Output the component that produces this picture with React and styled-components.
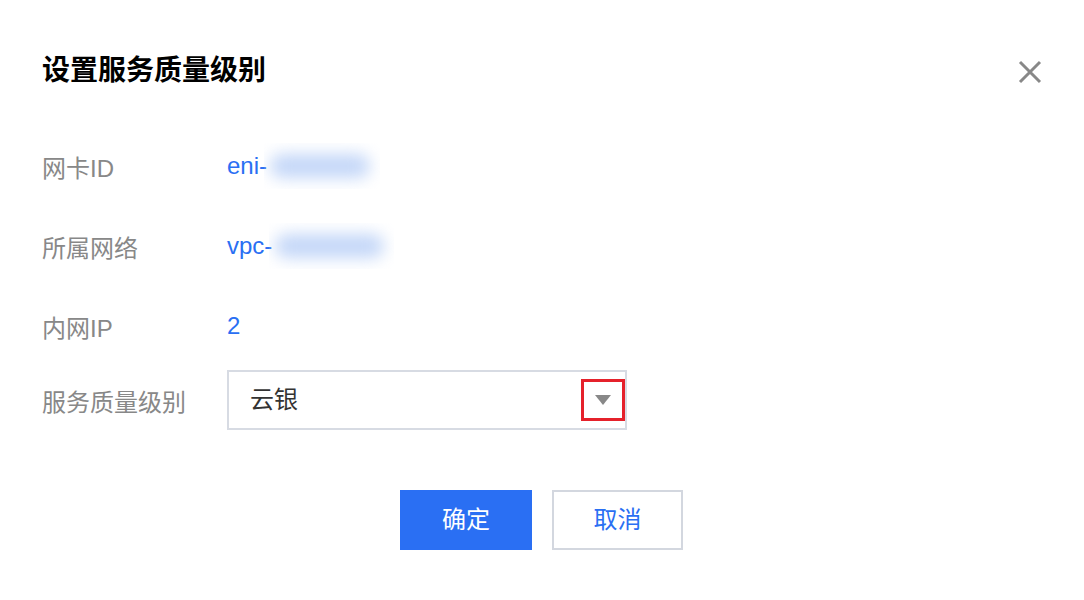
import React from "react";
import styled, { createGlobalStyle } from "styled-components";

const GlobalStyle = createGlobalStyle`
  html, body {
    margin: 0;
    padding: 0;
    background: #fff;
  }
  body {
    font-family: "Liberation Sans", "Noto Sans CJK SC", sans-serif;
  }
  * {
    box-sizing: border-box;
  }
`;

const BLUE = "#2a6ff3";

const Dialog = styled.div`
  width: 1084px;
  height: 600px;
  background: #fff;
  padding: 50px 42px 0 42px;
`;

const Header = styled.div`
  display: flex;
  justify-content: space-between;
  align-items: flex-start;
  height: 36px;
`;

const Title = styled.h1`
  margin: 0;
  font-size: 28px;
  line-height: 36px;
  font-weight: 700;
  color: #000;
  font-family: "Noto Sans CJK SC", sans-serif;
`;

const CloseButton = styled.button`
  border: 0;
  background: none;
  padding: 0;
  margin-top: 10px;
  width: 24px;
  height: 24px;
  cursor: pointer;
  display: flex;
`;

const Form = styled.div`
  margin-top: 40px;
  display: flex;
  flex-direction: column;
`;

const Row = styled.div`
  display: flex;
  align-items: center;
  height: ${(p) => p.$height || 80}px;
  margin-top: ${(p) => p.$offset || 0}px;
`;

const Label = styled.div`
  width: 185px;
  flex-shrink: 0;
  font-size: 24px;
  color: #888;
  font-family: "Liberation Sans", "Noto Sans CJK SC", sans-serif;
`;

const Value = styled.div`
  display: flex;
  align-items: center;
  font-size: 24px;
  color: ${BLUE};
`;

/* blurred-out identifier, drawn as a soft blue band */
const Masked = styled.span`
  display: inline-block;
  position: relative;
  width: ${(p) => p.$width}px;
  height: 46px;
  overflow: hidden;
  margin-left: -3px;

  &::after {
    content: "";
    position: absolute;
    left: 6px;
    right: 10px;
    top: 11px;
    bottom: 11px;
    border-radius: 12px;
    background: #c4d7f8;
    filter: blur(8px);
  }
`;

const Select = styled.div`
  width: 400px;
  height: 60px;
  border: 2px solid #d7dbe3;
  display: flex;
  align-items: center;
  justify-content: space-between;
  padding-left: 21px;
  font-size: 24px;
  color: #333;
  font-family: "Noto Sans CJK SC", sans-serif;
`;

const SelectText = styled.span`
  margin-bottom: 6px;
`;

const Marker = styled.span`
  width: 44px;
  height: 42px;
  border: 3px solid #e5212b;
  display: flex;
  align-items: center;
  justify-content: center;
`;

const Caret = styled.span`
  width: 0;
  height: 0;
  border-left: 8px solid transparent;
  border-right: 8px solid transparent;
  border-top: 10px solid #888;
`;

const Footer = styled.div`
  margin-top: 60px;
  display: flex;
  justify-content: center;
  gap: 20px;
  padding-right: 1px;
`;

const Button = styled.button`
  width: ${(p) => (p.$primary ? 132 : 131)}px;
  height: 60px;
  font-size: 24px;
  font-family: "Noto Sans CJK SC", sans-serif;
  cursor: pointer;
  background: ${(p) => (p.$primary ? BLUE : "#fff")};
  color: ${(p) => (p.$primary ? "#fff" : BLUE)};
  border: ${(p) => (p.$primary ? "0" : "2px solid #d3d7df")};
  padding: 0 0 5px;
`;

export default function App() {
  return (
    <>
      <GlobalStyle />
      <Dialog>
        <Header>
          <Title>设置服务质量级别</Title>
          <CloseButton aria-label="关闭">
            <svg width="24" height="24" viewBox="0 0 24 24">
              <path
                d="M2 2L22 22M22 2L2 22"
                stroke="#888"
                strokeWidth="3"
                fill="none"
              />
            </svg>
          </CloseButton>
        </Header>

        <Form>
          <Row>
            <Label>网卡ID</Label>
            <Value>
              eni-
              <Masked $width={116} />
            </Value>
          </Row>
          <Row>
            <Label>所属网络</Label>
            <Value>
              vpc-
              <Masked $width={125} />
            </Value>
          </Row>
          <Row>
            <Label>内网IP</Label>
            <Value>2</Value>
          </Row>
          <Row $height={60} $offset={4}>
            <Label>服务质量级别</Label>
            <Select>
              <SelectText>云银</SelectText>
              <Marker>
                <Caret />
              </Marker>
            </Select>
          </Row>
        </Form>

        <Footer>
          <Button $primary>确定</Button>
          <Button>取消</Button>
        </Footer>
      </Dialog>
    </>
  );
}
